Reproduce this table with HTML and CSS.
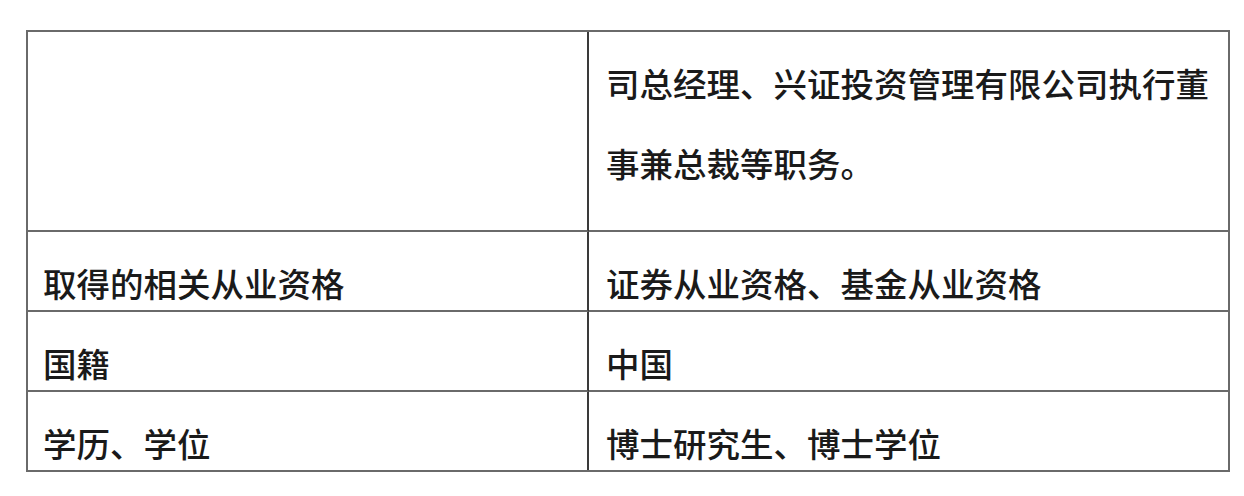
FILE: index.html
```html
<!DOCTYPE html>
<html lang="zh-CN">
<head>
<meta charset="utf-8">
<title>基金经理信息</title>
<link rel="stylesheet" href="styles.css">
</head>
<body>
<div class="tbl">
  <div class="cell left first"></div>
  <div class="cell right first multi">司总经理、兴证投资管理有限公司执行董<br>事兼总裁等职务。</div>
  <div class="cell left">取得的相关从业资格</div>
  <div class="cell right">证券从业资格、基金从业资格</div>
  <div class="cell left">国籍</div>
  <div class="cell right">中国</div>
  <div class="cell left last">学历、学位</div>
  <div class="cell right last">博士研究生、博士学位</div>
</div>
</body>
</html>
```

FILE: styles.css
```css
html, body {
  margin: 0;
  padding: 0;
  background: #ffffff;
}
body {
  font-family: "Noto Sans CJK SC", "Noto Sans", sans-serif;
  color: #1a1a1a;
}
.tbl {
  margin: 30px 0 0 26px;
  width: 1204px;
  box-sizing: border-box;
  border: 2px solid #6a6a6a;
  display: grid;
  grid-template-columns: 561px 639px;
  grid-template-rows: 200px 80px 80px 78px;
}
.cell {
  box-sizing: border-box;
  border-bottom: 2px solid #6a6a6a;
  font-size: 33.5px;
  font-weight: 500;
  line-height: 40px;
  padding-top: 31px;
  white-space: nowrap;
}
.cell.last {
  border-bottom: none;
}
.left {
  border-right: 2px solid #3a3a3a;
  padding-left: 15px;
}
.right {
  padding-left: 17px;
}
.multi {
  line-height: 80px;
  padding-top: 11px;
}
```
